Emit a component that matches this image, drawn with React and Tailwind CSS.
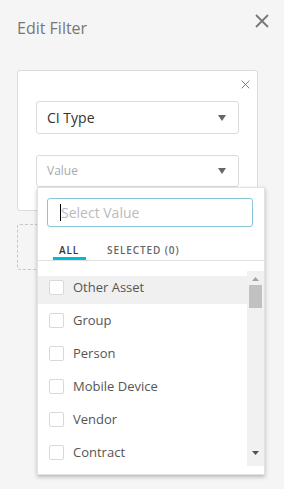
import React from 'react';

const ITEMS = ['Other Asset', 'Group', 'Person', 'Mobile Device', 'Vendor', 'Contract'];

function CloseIcon({ size = 14, stroke = 2, color = '#777' }) {
  return (
    <svg width={size} height={size} viewBox="0 0 14 14" className="block">
      <path d="M1 1L13 13M13 1L1 13" stroke={color} strokeWidth={stroke} fill="none" />
    </svg>
  );
}

function Caret() {
  return (
    <svg width="8" height="6" viewBox="0 0 8 6" className="block">
      <path d="M0 0H8L4 6Z" fill="#666" />
    </svg>
  );
}

export default function App() {
  return (
    <div
      className="relative w-[284px] h-[489px] overflow-hidden bg-[#f5f5f5]"
      style={{ fontFamily: '"Open Sans", "Noto Sans", sans-serif' }}
    >
      {/* Header */}
      <div className="flex items-start justify-between pl-[17px] pr-[15px] pt-[14px]">
        <h2 className="mt-[2px] text-[16px] leading-[24px] text-[#777]">Edit Filter</h2>
        <button>
          <CloseIcon size={14} stroke={1.8} color="#777" />
        </button>
      </div>

      {/* Filter card */}
      <div className="mx-[17px] mt-[30px] w-[241px] h-[141px] rounded-[3px] border border-[#dcdcdc] bg-white">
        <div className="flex justify-end pr-[7px] pt-[9px]">
          <CloseIcon size={9} stroke={1.3} color="#666" />
        </div>
        <div className="px-[18px] pt-[12px] flex flex-col gap-[21px]">
          <div className="h-[33px] rounded-[3px] border border-[#dcdcdc] flex items-center justify-between pl-[10px] pr-[12px]">
            <span className="text-[14px] text-[#333]">CI Type</span>
            <Caret />
          </div>
          <div className="h-[32px] rounded-[3px] border border-[#dcdcdc] flex items-center justify-between pl-[10px] pr-[12px]">
            <span className="text-[12px] text-[#aaa]">Value</span>
            <Caret />
          </div>
        </div>
      </div>

      {/* Dashed placeholder */}
      <div className="mx-[17px] mt-[13px] w-[241px] h-[46px] rounded-[3px] border border-dashed border-[#c8c8c8]" />

      {/* Dropdown menu */}
      <div className="absolute left-[37px] top-[187px] w-[228px] h-[288px] bg-white border border-[#e2e2e2] shadow-[0_2px_4px_rgba(0,0,0,0.25)] flex flex-col">
        <div className="px-[9px] pt-[10px]">
          <div className="h-[29px] w-[206px] rounded-[3px] border border-[#86c6d8] flex items-center pl-[12px]">
            <span className="w-px h-[17px] bg-black" />
            <span className="text-[14px] text-[#bbb]">Select Value</span>
          </div>
        </div>
        <div className="flex items-end h-[34px] border-b border-[#e0e0e0] pl-[14px]">
          <div className="w-[34px] flex flex-col items-center">
            <span className="text-[10px] font-semibold tracking-[0.9px] text-[#333] leading-[12px]">ALL</span>
            <span className="mt-[1px] h-[3px] w-[33px] bg-[#00bcd4]" />
          </div>
          <span className="ml-[21px] mb-[4px] text-[10px] font-semibold tracking-[0.9px] text-[#666] leading-[12px]">SELECTED (0)</span>
        </div>
        <div className="flex mt-[10px] h-[195px]">
          <div className="flex-1 overflow-hidden">
            {ITEMS.map((item, i) => (
              <div
                key={item}
                className={`h-[28px] mt-[5px] flex items-center pb-[5px] pl-[11px] ${i === 0 ? 'bg-[#f0f0f0]' : ''}`}
              >
                <span className="w-[15px] h-[15px] rounded-[2px] border border-[#d9d9d9] bg-white" />
                <span className="ml-[9px] text-[13px] text-[#555]">{item}</span>
              </div>
            ))}
          </div>
          <div className="w-[17px] bg-[#f1f1f1] flex flex-col items-center">
            <svg width="7" height="4" viewBox="0 0 7 4" className="mt-[6px] block">
              <path d="M0 4H7L3.5 0Z" fill="#a3a3a3" />
            </svg>
            <div className="mt-[4px] w-[13px] h-[23px] bg-[#c1c1c1]" />
            <div className="flex-1" />
            <svg width="7" height="4" viewBox="0 0 7 4" className="mb-[11px] block">
              <path d="M0 0H7L3.5 4Z" fill="#505050" />
            </svg>
          </div>
        </div>
      </div>
    </div>
  );
}
